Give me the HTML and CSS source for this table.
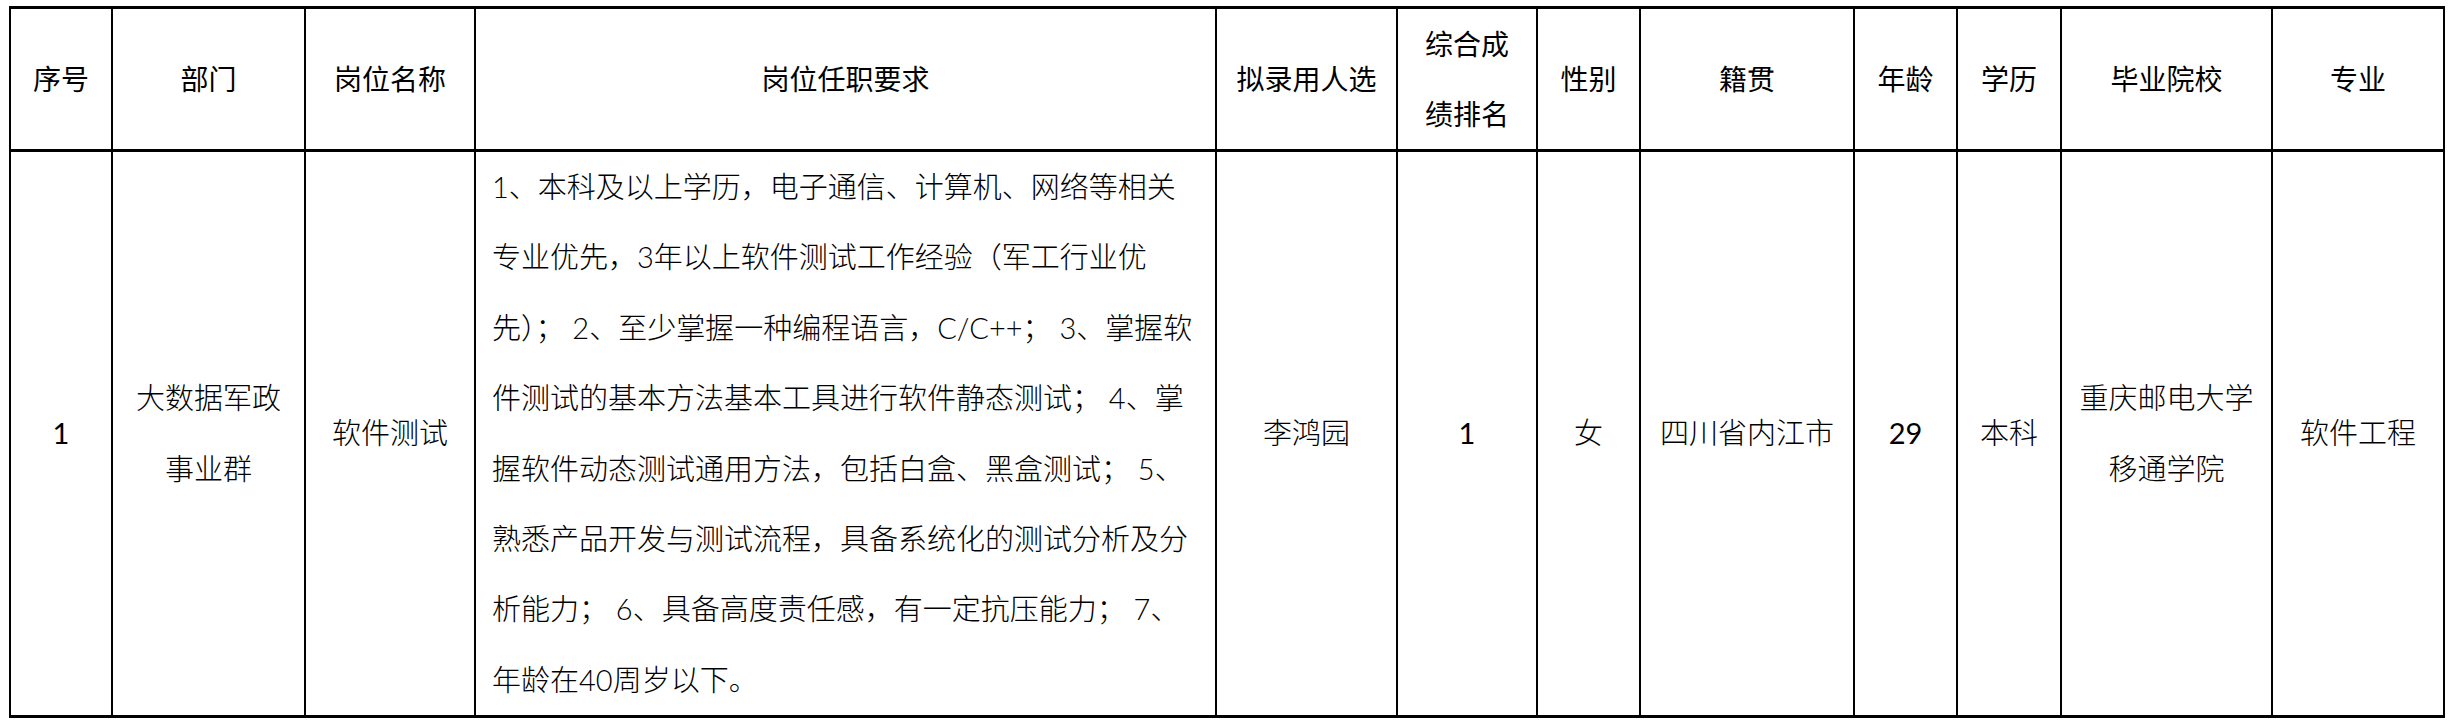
FILE: index.html
```html
<!DOCTYPE html>
<html lang="zh-CN">
<head>
<meta charset="utf-8">
<title>拟录用人员公示</title>
<link rel="stylesheet" href="styles.css">
</head>
<body>
<div class="sheet">
  <div class="cell head">序号</div>
  <div class="cell head">部门</div>
  <div class="cell head">岗位名称</div>
  <div class="cell head">岗位任职要求</div>
  <div class="cell head">拟录用人选</div>
  <div class="cell head">综合成<br>绩排名</div>
  <div class="cell head">性别</div>
  <div class="cell head">籍贯</div>
  <div class="cell head">年龄</div>
  <div class="cell head">学历</div>
  <div class="cell head">毕业院校</div>
  <div class="cell head">专业</div>

  <div class="cell body num">1</div>
  <div class="cell body">大数据军政<br>事业群</div>
  <div class="cell body">软件测试</div>
  <div class="cell body req">1、本科及以上学历，电子通信、计算机、网络等相关<br>专业优先，3年以上软件测试工作经验（军工行业优<br>先）； 2、至少掌握一种编程语言，C/C++； 3、掌握软<br>件测试的基本方法基本工具进行软件静态测试； 4、掌<br>握软件动态测试通用方法，包括白盒、黑盒测试； 5、<br>熟悉产品开发与测试流程，具备系统化的测试分析及分<br>析能力； 6、具备高度责任感，有一定抗压能力； 7、<br>年龄在40周岁以下。</div>
  <div class="cell body">李鸿园</div>
  <div class="cell body num">1</div>
  <div class="cell body">女</div>
  <div class="cell body">四川省内江市</div>
  <div class="cell body num">29</div>
  <div class="cell body">本科</div>
  <div class="cell body">重庆邮电大学<br>移通学院</div>
  <div class="cell body">软件工程</div>
</div>
</body>
</html>
```

FILE: styles.css
```css
html, body {
  background: #ffffff;
}
body {
  margin: 6px 0 0 9px;
  color: #000000;
  font-family: "Lato", "Noto Sans CJK SC", sans-serif;
}
.sheet {
  display: grid;
  grid-template-columns: 100px 191px 168px 739px 179px 138px 101px 212px 101px 102px 209px 170px;
  grid-template-rows: 140px 563px;
  column-gap: 2px;
  row-gap: 3px;
  padding: 3px 2px;
  background: #000000;
  width: max-content;
}
.cell {
  background: #ffffff;
  display: flex;
  align-items: center;
  justify-content: center;
  text-align: center;
  line-height: 70.4px;
  white-space: nowrap;
}
.head {
  font-size: 28px;
  font-weight: 400;
}
.body {
  font-size: 29px;
  font-weight: 300;
}
.num {
  font-weight: 400;
}
.req {
  justify-content: flex-start;
  text-align: left;
  padding-left: 16px;
}
```
